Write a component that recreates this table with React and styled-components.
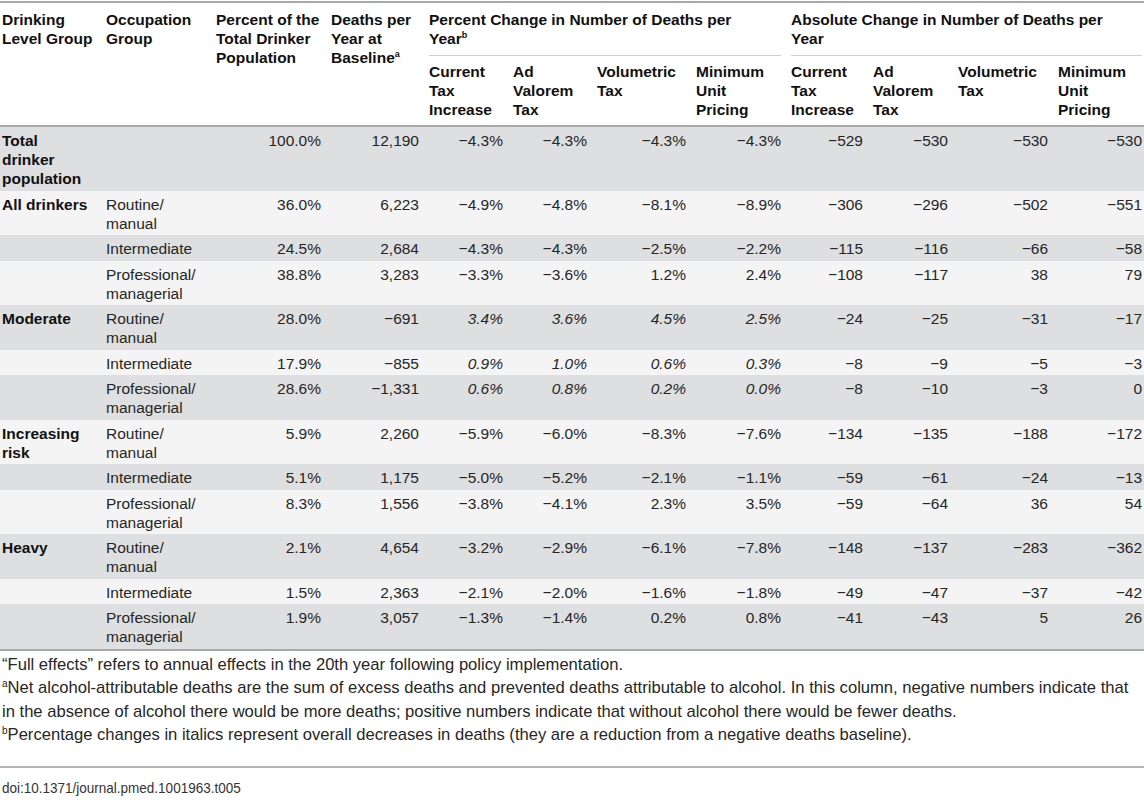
import React from "react";
import styled, { createGlobalStyle, css } from "styled-components";

const GlobalStyle = createGlobalStyle`
  html, body { margin: 0; padding: 0; background: #ffffff; }
  body {
    font-family: "Liberation Sans", Arial, Helvetica, sans-serif;
    color: #1d1d1d;
    -webkit-font-smoothing: antialiased;
  }
`;

const Page = styled.div`
  width: 1144px;
  padding-top: 1px;
`;

const Table = styled.table`
  width: 1144px;
  table-layout: fixed;
  border-collapse: separate;
  border-spacing: 0;
  font-size: 15.5px;
  line-height: 19px;
`;

const HeadCell = styled.th`
  text-align: left;
  vertical-align: top;
  font-weight: 700;
  color: #111;
  padding: ${(p) => (p.$sub ? "6px 5px 6px" : "7px 5px 0")};
  ${(p) => p.$first && css`padding-left: 2px; padding-right: 8px;`}
  ${(p) => p.$last && css`padding-right: 2px;`}
  ${(p) => p.$top && css`border-top: 2px solid #a9a9a9;`}
  ${(p) => p.$bottom && css`border-bottom: 2px solid #a9a9a9;`}
`;

const GroupLabel = styled.div`
  padding-bottom: 7px;
  border-bottom: 1px solid #cfcfcf;
`;

const Sup = styled.sup`
  font-size: 9px;
  line-height: 0;
  vertical-align: 6px;
`;

const Row = styled.tr`
  background: ${(p) => (p.$shade ? "#dedfe0" : "#f4f4f4")};
`;

const Cell = styled.td`
  vertical-align: top;
  padding: 4px 5px 2.5px;
  text-align: ${(p) => (p.$num ? "right" : "left")};
  font-weight: ${(p) => (p.$bold ? 700 : 400)};
  font-style: ${(p) => (p.$italic ? "italic" : "normal")};
  color: ${(p) => (p.$bold ? "#111" : "#262626")};
  ${(p) => p.$first && css`padding-left: 2px; padding-right: 8px;`}
  ${(p) => p.$last && css`padding-right: 2px;`}
  ${(p) => p.$end && css`border-bottom: 2px solid #a9a9a9;`}
`;

const Notes = styled.div`
  width: 1142px;
  padding: 2px 0 19px 2px;
  font-size: 16.6px;
  line-height: 23.5px;
  color: #262626;
`;

const Note = styled.p`
  margin: 0;
`;

const NoteSup = styled.sup`
  font-size: 10px;
  line-height: 0;
  vertical-align: 6px;
`;

const Rule = styled.div`
  width: 1144px;
  border-top: 2px solid #b3b3b3;
`;

const Doi = styled.div`
  padding: 11px 0 0 2px;
  font-size: 15px;
  line-height: 18px;
  color: #333;
`;

const DoiText = styled.span`
  display: inline-block;
  transform: scaleX(0.9);
  transform-origin: left center;
  white-space: nowrap;
`;

const widths = [101, 110, 115, 98, 84, 84, 99, 95, 82, 85, 100, 91];

const M = "\u2212";

const data = [
  {
    group: "Total drinker population",
    occ: "",
    pct: "100.0%",
    deaths: "12,190",
    pc: [`${M}4.3%`, `${M}4.3%`, `${M}4.3%`, `${M}4.3%`],
    ac: [`${M}529`, `${M}530`, `${M}530`, `${M}530`],
  },
  {
    group: "All drinkers",
    occ: "Routine/ manual",
    pct: "36.0%",
    deaths: "6,223",
    pc: [`${M}4.9%`, `${M}4.8%`, `${M}8.1%`, `${M}8.9%`],
    ac: [`${M}306`, `${M}296`, `${M}502`, `${M}551`],
  },
  {
    group: "",
    occ: "Intermediate",
    pct: "24.5%",
    deaths: "2,684",
    pc: [`${M}4.3%`, `${M}4.3%`, `${M}2.5%`, `${M}2.2%`],
    ac: [`${M}115`, `${M}116`, `${M}66`, `${M}58`],
  },
  {
    group: "",
    occ: "Professional/ managerial",
    pct: "38.8%",
    deaths: "3,283",
    pc: [`${M}3.3%`, `${M}3.6%`, "1.2%", "2.4%"],
    ac: [`${M}108`, `${M}117`, "38", "79"],
  },
  {
    group: "Moderate",
    occ: "Routine/ manual",
    pct: "28.0%",
    deaths: `${M}691`,
    pc: ["3.4%", "3.6%", "4.5%", "2.5%"],
    italic: true,
    ac: [`${M}24`, `${M}25`, `${M}31`, `${M}17`],
  },
  {
    group: "",
    occ: "Intermediate",
    pct: "17.9%",
    deaths: `${M}855`,
    pc: ["0.9%", "1.0%", "0.6%", "0.3%"],
    italic: true,
    ac: [`${M}8`, `${M}9`, `${M}5`, `${M}3`],
  },
  {
    group: "",
    occ: "Professional/ managerial",
    pct: "28.6%",
    deaths: `${M}1,331`,
    pc: ["0.6%", "0.8%", "0.2%", "0.0%"],
    italic: true,
    ac: [`${M}8`, `${M}10`, `${M}3`, "0"],
  },
  {
    group: "Increasing risk",
    occ: "Routine/ manual",
    pct: "5.9%",
    deaths: "2,260",
    pc: [`${M}5.9%`, `${M}6.0%`, `${M}8.3%`, `${M}7.6%`],
    ac: [`${M}134`, `${M}135`, `${M}188`, `${M}172`],
  },
  {
    group: "",
    occ: "Intermediate",
    pct: "5.1%",
    deaths: "1,175",
    pc: [`${M}5.0%`, `${M}5.2%`, `${M}2.1%`, `${M}1.1%`],
    ac: [`${M}59`, `${M}61`, `${M}24`, `${M}13`],
  },
  {
    group: "",
    occ: "Professional/ managerial",
    pct: "8.3%",
    deaths: "1,556",
    pc: [`${M}3.8%`, `${M}4.1%`, "2.3%", "3.5%"],
    ac: [`${M}59`, `${M}64`, "36", "54"],
  },
  {
    group: "Heavy",
    occ: "Routine/ manual",
    pct: "2.1%",
    deaths: "4,654",
    pc: [`${M}3.2%`, `${M}2.9%`, `${M}6.1%`, `${M}7.8%`],
    ac: [`${M}148`, `${M}137`, `${M}283`, `${M}362`],
  },
  {
    group: "",
    occ: "Intermediate",
    pct: "1.5%",
    deaths: "2,363",
    pc: [`${M}2.1%`, `${M}2.0%`, `${M}1.6%`, `${M}1.8%`],
    ac: [`${M}49`, `${M}47`, `${M}37`, `${M}42`],
  },
  {
    group: "",
    occ: "Professional/ managerial",
    pct: "1.9%",
    deaths: "3,057",
    pc: [`${M}1.3%`, `${M}1.4%`, "0.2%", "0.8%"],
    ac: [`${M}41`, `${M}43`, "5", "26"],
  },
];

const subHeads = [
  "Current Tax Increase",
  "Ad Valorem Tax",
  "Volumetric Tax",
  "Minimum Unit Pricing",
];

export default function App() {
  const last = data.length - 1;
  return (
    <Page>
      <GlobalStyle />
      <Table>
        <colgroup>
          {widths.map((w, i) => (
            <col key={i} style={{ width: w }} />
          ))}
        </colgroup>
        <thead>
          <tr>
            <HeadCell rowSpan={2} $first $top $bottom>
              Drinking Level Group
            </HeadCell>
            <HeadCell rowSpan={2} $top $bottom>
              Occupation Group
            </HeadCell>
            <HeadCell rowSpan={2} $top $bottom>
              Percent of the Total Drinker Population
            </HeadCell>
            <HeadCell rowSpan={2} $top $bottom>
              Deaths per Year at Baseline<Sup>a</Sup>
            </HeadCell>
            <HeadCell colSpan={4} $top>
              <GroupLabel>
                Percent Change in Number of Deaths per
                <br />
                Year<Sup>b</Sup>
              </GroupLabel>
            </HeadCell>
            <HeadCell colSpan={4} $top $last>
              <GroupLabel>
                Absolute Change in Number of Deaths per
                <br />
                Year
              </GroupLabel>
            </HeadCell>
          </tr>
          <tr>
            {[...subHeads, ...subHeads].map((h, i) => (
              <HeadCell key={i} $sub $bottom $last={i === 7}>
                {h}
              </HeadCell>
            ))}
          </tr>
        </thead>
        <tbody>
          {data.map((r, i) => (
            <Row key={i} $shade={i % 2 === 0}>
              <Cell $first $bold $end={i === last}>
                {r.group}
              </Cell>
              <Cell $end={i === last}>{r.occ}</Cell>
              <Cell $num $end={i === last}>
                {r.pct}
              </Cell>
              <Cell $num $end={i === last}>
                {r.deaths}
              </Cell>
              {r.pc.map((v, j) => (
                <Cell key={`p${j}`} $num $italic={r.italic} $end={i === last}>
                  {v}
                </Cell>
              ))}
              {r.ac.map((v, j) => (
                <Cell key={`a${j}`} $num $last={j === 3} $end={i === last}>
                  {v}
                </Cell>
              ))}
            </Row>
          ))}
        </tbody>
      </Table>
      <Notes>
        <Note>
          “Full effects” refers to annual effects in the 20th year following
          policy implementation.
        </Note>
        <Note>
          <NoteSup>a</NoteSup>Net alcohol-attributable deaths are the sum of
          excess deaths and prevented deaths attributable to alcohol. In this
          column, negative numbers indicate that in the absence of alcohol there
          would be more deaths; positive numbers indicate that without alcohol
          there would be fewer deaths.
        </Note>
        <Note>
          <NoteSup>b</NoteSup>Percentage changes in italics represent overall
          decreases in deaths (they are a reduction from a negative deaths
          baseline).
        </Note>
      </Notes>
      <Rule />
      <Doi>
        <DoiText>doi:10.1371/journal.pmed.1001963.t005</DoiText>
      </Doi>
    </Page>
  );
}
